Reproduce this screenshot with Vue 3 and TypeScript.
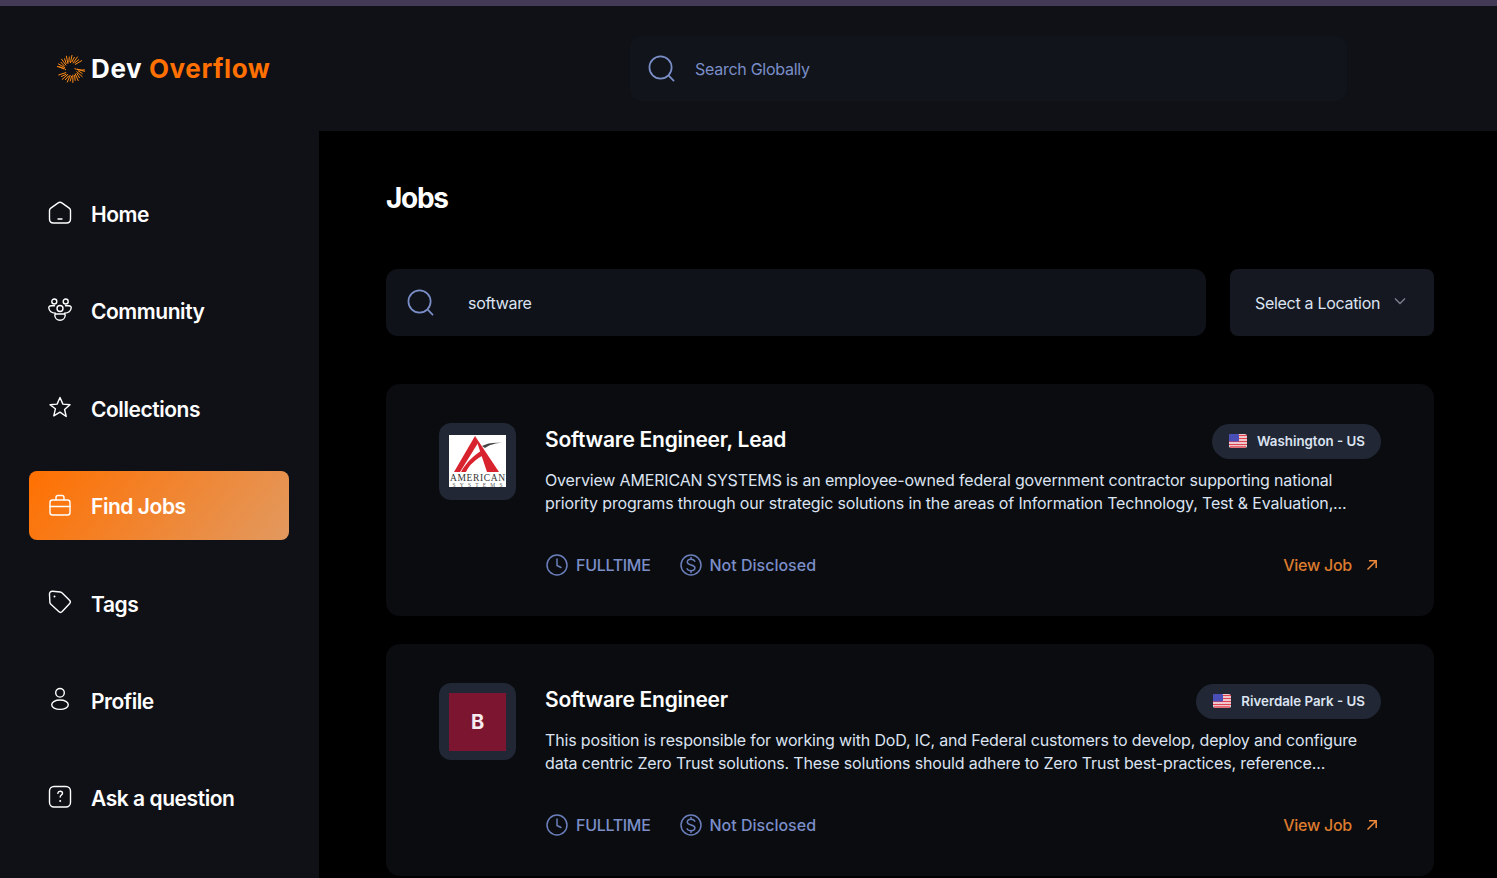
<script setup lang="ts">
interface NavItem {
  label: string
  icon: string
  active?: boolean
}

interface Job {
  title: string
  location: string
  desc: string[]
  logo: 'american' | 'letter'
}

const navItems: NavItem[] = [
  { label: 'Home', icon: 'home' },
  { label: 'Community', icon: 'community' },
  { label: 'Collections', icon: 'star' },
  { label: 'Find Jobs', icon: 'jobs', active: true },
  { label: 'Tags', icon: 'tag' },
  { label: 'Profile', icon: 'profile' },
  { label: 'Ask a question', icon: 'question' },
]

const jobs: Job[] = [
  {
    title: 'Software Engineer, Lead',
    location: 'Washington - US',
    desc: [
      'Overview AMERICAN SYSTEMS is an employee-owned federal government contractor supporting national',
      'priority programs through our strategic solutions in the areas of Information Technology, Test & Evaluation,...',
    ],
    logo: 'american',
  },
  {
    title: 'Software Engineer',
    location: 'Riverdale Park - US',
    desc: [
      'This position is responsible for working with DoD, IC, and Federal customers to develop, deploy and configure',
      'data centric Zero Trust solutions. These solutions should adhere to Zero Trust best-practices, reference...',
    ],
    logo: 'letter',
  },
]

// sunburst rays of the logo: two swept halves with an open band through the middle
const rays = Array.from({ length: 30 }, (_, i) => {
  const deg = i * 12
  const rad = (deg * Math.PI) / 180
  const sweep = rad + 0.18
  const inner = i % 2 ? 7 : 6
  const outer = i % 2 ? 12.5 : 14
  return {
    deg,
    x1: 14 + Math.cos(rad) * inner,
    y1: 14 + Math.sin(rad) * inner,
    x2: 14 + Math.cos(sweep) * outer,
    y2: 14 + Math.sin(sweep) * outer,
  }
}).filter((r) => !(r.deg >= 324 && r.deg <= 348) && !(r.deg >= 156 && r.deg <= 168))
</script>

<template>
  <div class="page">
    <div class="top-strip"></div>

    <header class="navbar">
      <div class="brand">
        <svg class="brand-icon" viewBox="0 0 28 28" fill="none">
          <line
            v-for="(r, i) in rays"
            :key="i"
            :x1="r.x1"
            :y1="r.y1"
            :x2="r.x2"
            :y2="r.y2"
            stroke="#ff8a14"
            stroke-width="1"
          />
          <path d="M0 11.500C4 12 7 13 9 15" stroke="#ff8a14" />
          <path d="M28 15C23 15 20 15 17.500 13.500" stroke="#ff8a14" />
        </svg>
        <span class="brand-text">Dev <span class="brand-accent">Overflow</span></span>
      </div>
      <div class="global-search">
        <svg class="search-icon" viewBox="0 0 28 28" fill="none" stroke="#7b8ec8" stroke-width="1.8">
          <circle cx="13" cy="13" r="11.5" />
          <path d="M21.5 21.5 26.5 26.5" stroke-linecap="round" />
        </svg>
        <span class="global-placeholder">Search Globally</span>
      </div>
    </header>

    <div class="body">
      <aside class="sidebar">
        <a v-for="item in navItems" :key="item.label" class="nav-item" :class="{ active: item.active }">
          <svg class="nav-icon" viewBox="0 0 24 24" fill="none" stroke="currentColor" stroke-width="1.4" stroke-linecap="round" stroke-linejoin="round">
            <template v-if="item.icon === 'home'">
              <path d="M1.500 9.500c0-1 .5-1.800 1.300-2.400l7-5a3.800 3.800 0 0 1 4.400 0l7 5c.8.6 1.300 1.400 1.300 2.400V18c0 2.400-1.600 4-4 4h-13c-2.400 0-4-1.600-4-4Z" />
              <path d="M10 18h4" />
            </template>
            <template v-else-if="item.icon === 'community'">
              <circle cx="6.300" cy="3.500" r="2.500" />
              <circle cx="17.700" cy="3.500" r="2.500" />
              <circle cx="12" cy="10.500" r="3" />
              <path d="M6.500 7.800H3c-1.500 0-2.400 1-2.200 2.200.4 2.800 3 5 6.700 5.200" />
              <path d="M17.500 7.800H21c1.500 0 2.400 1 2.200 2.200-.4 2.800-3 5-6.700 5.200" />
              <path d="M6.800 17c0-.6.4-1 1-1h8.400c.6 0 1 .4 1 1 0 3-2.300 5.200-5.200 5.200S6.800 20 6.800 17Z" />
            </template>
            <template v-else-if="item.icon === 'star'">
              <path d="m12 2.500 2.900 6.600 7.100.7-5.400 4.700 1.600 7L12 17.200 5.800 20.800l1.600-7L2 9.800l7.100-.7Z" />
            </template>
            <template v-else-if="item.icon === 'jobs'">
              <rect x="2" y="7" width="20" height="15" rx="2.500" />
              <path d="M8 7V4.500C8 3 9 2.500 10 2.500h4c1 0 2 .5 2 2V7" />
              <path d="M2 13.500h20" />
            </template>
            <template v-else-if="item.icon === 'tag'">
              <path d="M1.500 4.500c-.2-2 1.200-3.400 3.200-3.200l7.500.7c.8.1 1.500.4 2 1l7.300 7.300c1 1 1 2.500 0 3.500l-7.300 7.800c-1 1-2.500 1-3.500 0l-7.800-7.300c-.6-.5-.9-1.200-1-2Z" />
              <path d="M6.500 6.500h.01" stroke-width="2" />
            </template>
            <template v-else-if="item.icon === 'profile'">
              <circle cx="12" cy="5.800" r="4.300" />
              <ellipse cx="12" cy="17.700" rx="8.300" ry="4.700" />
            </template>
            <template v-else>
              <rect x="1.500" y="1.500" width="21" height="20.500" rx="4.500" />
              <path d="M9.800 8.300c.2-1.300 1.100-2 2.400-2 1.300 0 2.300.8 2.300 2 0 1.700-2.300 1.800-2.300 3.700" />
              <path d="M12.200 16h.01" stroke-width="2" />
            </template>
          </svg>
          <span class="nav-label">{{ item.label }}</span>
        </a>
      </aside>

      <main class="main">
        <h1 class="title">Jobs</h1>

        <div class="filters">
          <div class="job-search">
            <svg class="search-icon" viewBox="0 0 28 28" fill="none" stroke="#7b8ec8" stroke-width="1.800">
              <circle cx="13" cy="13" r="11.500" />
              <path d="M21.500 21.500 26.500 26.500" stroke-linecap="round" />
            </svg>
            <span class="job-query">software</span>
          </div>
          <div class="location-select">
            <span>Select a Location</span>
            <svg class="chevron" viewBox="0 0 12 8" fill="none" stroke="#7d8390" stroke-width="1.300">
              <path d="M1 1.500 6 6.500 11 1.500" />
            </svg>
          </div>
        </div>

        <article v-for="job in jobs" :key="job.title" class="job-card">
          <div class="logo-box">
            <svg v-if="job.logo === 'american'" class="logo-american" viewBox="0 0 57 52">
              <rect width="57" height="52" fill="#fff" />
              <path d="M26 1 5 37h6L29 8Z" fill="#d8222e" />
              <path d="M26 1 50 37H38L29 10Z" fill="#d8222e" />
              <path d="M12 37c6-11 14-17 21-22l2 5c-8 4-15 10-18 17Z" fill="#d8222e" />
              <path d="M33 11c5-3 13-4 20-3-7 0-13 2-17 5Z" fill="#444" />
              <text class="american-word" x="28.500" y="46" text-anchor="middle" textLength="55">AMERICAN</text>
              <text class="american-sub" x="28.500" y="52" text-anchor="middle" textLength="50">SYSTEMS</text>
            </svg>
            <div v-else class="logo-letter">B</div>
          </div>

          <div class="job-content">
            <div class="job-head">
              <h2 class="job-title">{{ job.title }}</h2>
              <div class="location-pill">
                <svg class="flag" viewBox="0 0 18 14">
                  <rect width="18" height="14" rx="2.500" fill="#f3f3f6" />
                  <path d="M0 1.500h18M0 4.500h18M0 7.500h18M0 10.500h18M1 13h16" stroke="#e0434f" stroke-width="1.300" />
                  <rect width="10" height="7.500" rx="1" fill="#4a4fb8" />
                </svg>
                <span>{{ job.location }}</span>
              </div>
            </div>

            <p class="job-desc">
              <span v-for="line in job.desc" :key="line" class="desc-line">{{ line }}</span>
            </p>

            <div class="job-foot">
              <div class="meta">
                <svg class="meta-icon" viewBox="0 0 22 22" fill="none" stroke="#6a7fbb" stroke-width="1.500" stroke-linecap="round" stroke-linejoin="round">
                  <circle cx="11" cy="11" r="10" />
                  <path d="M11 5v6.500l4 2" />
                </svg>
                <span class="meta-type">FULLTIME</span>
              </div>
              <div class="meta">
                <svg class="meta-icon" viewBox="0 0 22 22" fill="none" stroke="#6a7fbb" stroke-width="1.500" stroke-linecap="round" stroke-linejoin="round">
                  <circle cx="11" cy="11" r="10" />
                  <path d="M14.800 7.300c-.5-1.200-2-2-3.800-2-2.100 0-3.700 1-3.700 2.800 0 3.800 7.600 1.800 7.600 5.600 0 1.900-1.700 3-3.900 3-1.900 0-3.400-.8-3.900-2" />
                  <path d="M11 3.500v1.800M11 16.700v1.800" />
                </svg>
                <span>Not Disclosed</span>
              </div>
              <a class="view-job">
                <span>View Job</span>
                <svg class="arrow" viewBox="0 0 12 12" fill="none" stroke="#f08a3c" stroke-width="1.500">
                  <path d="M1.500 10.500 10 2M3 1.800h7.200V9" />
                </svg>
              </a>
            </div>
          </div>
        </article>
      </main>
    </div>
  </div>
</template>

<style scoped>
.page {
  height: 878px;
  overflow: hidden;
  display: flex;
  flex-direction: column;
  background: #000;
  color: #fff;
  font-family: Inter, "Liberation Sans", sans-serif;
}

.top-strip {
  height: 6px;
  background: #433b55;
  flex-shrink: 0;
}

.navbar {
  height: 125px;
  flex-shrink: 0;
  display: flex;
  background: #0f1117;
  padding-left: 57px;
  padding-top: 30px;
  box-sizing: border-box;
}

.brand {
  width: 573px;
  height: 65px;
  display: flex;
  align-items: center;
  gap: 6px;
}

.brand-icon {
  width: 28px;
  height: 28px;
}

.brand-text {
  font-size: 26px;
  font-weight: 700;
  letter-spacing: 0.6px;
}

.brand-accent {
  color: #ff7000;
}

.global-search {
  width: 717px;
  height: 65px;
  border-radius: 12px;
  background: #11141b;
  display: flex;
  align-items: center;
  padding-left: 18px;
  box-sizing: border-box;
}

.search-icon {
  width: 27px;
  height: 27px;
  flex-shrink: 0;
}

.global-placeholder {
  margin-left: 20px;
  font-size: 16px;
  letter-spacing: -0.27px;
  color: #7b8ec8;
}

.body {
  flex: 1;
  display: flex;
  min-height: 0;
}

.sidebar {
  width: 319px;
  flex-shrink: 0;
  box-sizing: border-box;
  background: #0f1117;
  padding: 48px 30px 0 29px;
  display: flex;
  flex-direction: column;
  gap: 28.400px;
}

.nav-item {
  height: 69px;
  flex-shrink: 0;
  display: flex;
  align-items: center;
  gap: 19px;
  padding-left: 19px;
  border-radius: 8px;
  font-size: 21px;
  font-weight: 600;
  letter-spacing: -0.45px;
  color: #fff;
}

.nav-label {
  padding-top: 2px;
}

.nav-item.active {
  background: linear-gradient(129deg, #ff7000 0%, #e2995f 100%);
}

.nav-icon {
  width: 24px;
  height: 24px;
  flex-shrink: 0;
  margin-bottom: 2px;
}

.main {
  flex: 1;
  padding: 48px 63px 0 67px;
  min-width: 0;
}

.title {
  margin: 0;
  font-size: 28px;
  line-height: 38px;
  font-weight: 700;
  letter-spacing: -1.300px;
}

.filters {
  display: flex;
  gap: 24px;
  margin-top: 52px;
}

.job-search {
  flex: 1;
  height: 67px;
  border-radius: 12px;
  background: #0f1219;
  display: flex;
  align-items: center;
  padding-left: 21px;
}

.job-query {
  margin-left: 34px;
  padding-top: 1px;
  font-size: 16px;
  letter-spacing: -0.3px;
  color: #dce3f1;
}

.location-select {
  width: 204px;
  height: 67px;
  border-radius: 8px;
  background: #151821;
  display: flex;
  align-items: center;
  padding-left: 25px;
  box-sizing: border-box;
  font-size: 16px;
  letter-spacing: -0.3px;
  color: #dce3f1;
}

.location-select span {
  padding-top: 1px;
}

.chevron {
  width: 12px;
  height: 8px;
  margin-left: 14px;
  margin-bottom: 3px;
}

.job-card {
  display: flex;
  height: 232px;
  box-sizing: border-box;
  margin-top: 28px;
  padding: 39px 53px 0;
  border-radius: 14px;
  background: #0a0c10;
}

.filters + .job-card {
  margin-top: 48px;
}

.logo-box {
  width: 77px;
  height: 77px;
  flex-shrink: 0;
  border-radius: 12px;
  background: #212734;
  display: flex;
  align-items: center;
  justify-content: center;
}

.logo-american {
  width: 57px;
  height: 52px;
  margin-bottom: 1px;
}

.american-word {
  font-family: "Liberation Serif", serif;
  font-size: 9.500px;
  fill: #333;
}

.american-sub {
  font-family: "Liberation Serif", serif;
  font-size: 5.500px;
  fill: #555;
}

.logo-letter {
  width: 57px;
  height: 58px;
  background: #7c1530;
  color: #f6ecef;
  font-size: 20px;
  font-weight: 700;
  display: flex;
  align-items: center;
  justify-content: center;
}

.job-content {
  flex: 1;
  margin-left: 29px;
  min-width: 0;
}

.job-head {
  display: flex;
  justify-content: space-between;
  align-items: center;
  height: 36px;
}

.job-title {
  margin: 0 0 3px;
  font-size: 21px;
  font-weight: 600;
  letter-spacing: -0.25px;
  color: #fff;
}

.location-pill {
  height: 35px;
  border-radius: 18px;
  background: #212734;
  display: flex;
  align-items: center;
  gap: 10px;
  padding: 0 16px 0 17px;
  font-size: 13.300px;
  font-weight: 600;
  color: #dce3f1;
}

.flag {
  width: 18px;
  height: 14px;
}

.job-desc {
  margin: 10px 0 0;
  font-size: 16px;
  line-height: 23px;
  letter-spacing: -0.16px;
  color: #dce3f1;
}

.desc-line {
  display: block;
  white-space: nowrap;
}

.job-foot {
  display: flex;
  align-items: center;
  margin-top: 37px;
  height: 26px;
}

.meta {
  display: flex;
  align-items: center;
  gap: 8px;
  margin-right: 29px;
  margin-left: 1px;
  font-size: 16px;
  font-weight: 500;
  color: #7b8ec8;
}

.meta + .meta {
  margin-left: 0;
}

.meta-type {
  letter-spacing: -0.3px;
}

.meta-icon {
  width: 22px;
  height: 22px;
}

.view-job {
  margin-left: auto;
  display: flex;
  align-items: center;
  gap: 14px;
  padding-right: 3px;
  font-size: 16px;
  font-weight: 500;
  letter-spacing: -0.25px;
  color: #dd7b2e;
}

.arrow {
  width: 12px;
  height: 12px;
}
</style>

<style>
html,
body {
  margin: 0;
  background: #000;
}
</style>
